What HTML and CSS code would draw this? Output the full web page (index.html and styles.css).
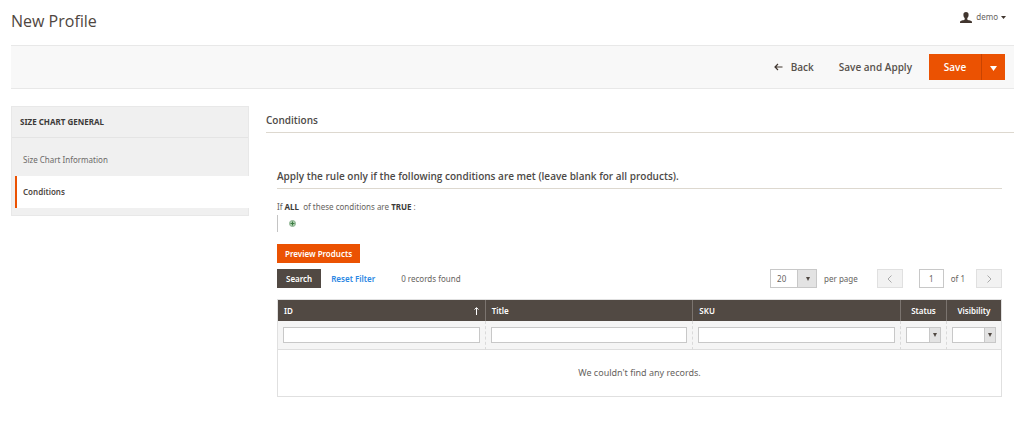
FILE: index.html
```html
<!DOCTYPE html>
<html lang="en">
<head>
<meta charset="utf-8">
<meta name="viewport" content="width=device-width, initial-scale=1">
<title>New Profile</title>
<link rel="stylesheet" href="styles.css">
</head>
<body>
<div class="page">
  <header class="page-header">
    <h1 class="page-title">New Profile</h1>
    <button type="button" class="account">
      <svg class="account-icon" viewBox="0 0 12 11" aria-hidden="true"><path d="M6 0C4.300 0 3.300 .9 3.400 2.900C3.500 4.600 4 5.400 4.700 6V7.600C4.400 8.500 1 8.300 .3 9.300C0 9.800 0 10.500 0 11H12C12 10.500 12 9.800 11.700 9.300C11 8.300 7.600 8.500 7.300 7.600V6C8 5.400 8.500 4.600 8.600 2.900C8.700 .9 7.700 0 6 0Z"/></svg>
      <span>demo</span>
      <svg class="account-caret" viewBox="0 0 5 3" aria-hidden="true"><path d="M0 0H5L2.500 3Z"/></svg>
    </button>
  </header>

  <div class="toolbar">
    <button type="button" class="action">
      <svg class="back-icon" viewBox="0 0 9 8" aria-hidden="true"><path d="M8.500 4H1M4 1L1 4L4 7"/></svg>
      <span>Back</span>
    </button>
    <button type="button" class="action">Save and Apply</button>
    <div class="split">
      <button type="button" class="split-main">Save</button>
      <button type="button" class="split-toggle" aria-label="More save options">
        <svg class="split-caret" viewBox="0 0 7 5" aria-hidden="true"><path d="M0 0H7L3.500 5Z"/></svg>
      </button>
    </div>
  </div>

  <div class="columns">
    <nav class="sidebar">
      <h2 class="sidebar-title">SIZE CHART GENERAL</h2>
      <ul class="tabs">
        <li><a class="tab" href="#information">Size Chart Information</a></li>
        <li><a class="tab tab-active" href="#conditions">Conditions</a></li>
      </ul>
    </nav>

    <main class="content">
      <h2 class="section-title">Conditions</h2>
      <div class="fieldset">
        <h3 class="legend">Apply the rule only if the following conditions are met (leave blank for all products).</h3>
        <p class="rule">If <b>ALL</b>&nbsp; of these conditions are <b>TRUE</b> :</p>
        <div class="rule-tree">
          <button type="button" class="add" aria-label="Add condition">
            <svg class="add-icon" viewBox="0 0 7 7" aria-hidden="true"><circle cx="3.500" cy="3.500" r="3"/><path d="M3.500 1.500V5.500M1.500 3.500H5.500"/></svg>
          </button>
        </div>
        <button type="button" class="btn btn-primary">Preview Products</button>

        <div class="grid-bar">
          <button type="button" class="btn btn-dark">Search</button>
          <button type="button" class="reset">Reset Filter</button>
          <span class="found">0 records found</span>
          <span class="select per-page"><select id="limit"><option>20</option></select></span>
          <label class="per-page-label" for="limit">per page</label>
          <button type="button" class="pager" aria-label="Previous page" disabled>
            <svg class="pager-icon" viewBox="0 0 5 8" aria-hidden="true"><path d="M4.500 .5L1 4L4.500 7.500"/></svg>
          </button>
          <input class="page-input" id="page" type="text" value="1" aria-label="Page">
          <label class="page-total" for="page">of 1</label>
          <button type="button" class="pager" aria-label="Next page" disabled>
            <svg class="pager-icon" viewBox="0 0 5 8" aria-hidden="true"><path d="M.5 .5L4 4L.5 7.500"/></svg>
          </button>
        </div>

        <table class="grid">
          <colgroup><col><col><col><col class="col-status"><col class="col-visibility"></colgroup>
          <thead>
            <tr class="heads">
              <th scope="col"><span class="sorted">ID <svg class="sort-icon" viewBox="0 0 5 8" aria-hidden="true"><path d="M2.500 8V1M.5 2.500L2.500 .7L4.500 2.500"/></svg></span></th>
              <th scope="col">Title</th>
              <th scope="col">SKU</th>
              <th scope="col" class="center">Status</th>
              <th scope="col" class="center">Visibility</th>
            </tr>
            <tr class="filters">
              <td><input class="filter" type="text" aria-label="Filter by ID"></td>
              <td><input class="filter" type="text" aria-label="Filter by title"></td>
              <td><input class="filter" type="text" aria-label="Filter by SKU"></td>
              <td><span class="select select-small"><select aria-label="Filter by status"><option></option></select></span></td>
              <td><span class="select select-small"><select aria-label="Filter by visibility"><option></option></select></span></td>
            </tr>
          </thead>
          <tbody>
            <tr><td class="empty" colspan="5">We couldn't find any records.</td></tr>
          </tbody>
        </table>
      </div>
    </main>
  </div>
</div>
</body>
</html>
```

FILE: styles.css
```css
* { box-sizing: border-box; }

body {
  margin: 0;
  background: #fff;
  color: #666360;
  font: 8px/16px "Noto Sans", "Open Sans", sans-serif;
}

button, input, select { font: inherit; color: inherit; margin: 0; border-radius: 0; }
button { border: 0; padding: 0; background: none; cursor: pointer; }
h1, h2, h3, p, ul { margin: 0; padding: 0; }
svg { display: block; flex: none; }

.page { padding: 0 10px 0 11px; }

.page-header {
  display: flex;
  justify-content: space-between;
  align-items: flex-start;
  height: 45px;
  padding: 9px 8px 0 0;
}
.page-title { font: 400 16px/24px "Open Sans", sans-serif; color: #4f4640; }
.account { display: flex; align-items: center; gap: 3px; }
.account-icon { width: 12px; height: 11px; margin-right: 1px; fill: #41362f; }
.account-caret { width: 5px; height: 3px; fill: #41362f; }

.toolbar {
  display: flex;
  justify-content: flex-end;
  align-items: center;
  gap: 25px;
  height: 44px;
  padding-right: 9px;
  background: #f8f8f8;
  border-top: 1px solid #e8e8e8;
  border-bottom: 1px solid #e8e8e8;
  font-family: "Open Sans", sans-serif;
  font-size: 10px;
  font-weight: 600;
}
.action { display: flex; align-items: center; gap: 8px; color: #57514c; }
.back-icon { width: 9px; height: 8px; fill: none; stroke: #41362f; stroke-width: 1.2; }
.split { display: flex; height: 26px; margin-left: -8px; background: #eb5202; color: #fff; }
.split-main { width: 52px; }
.split-toggle { display: flex; align-items: center; justify-content: center; width: 24px; border-left: 1px solid #c84402; }
.split-caret { width: 7px; height: 5px; margin-top: 3px; fill: #fff; }

.columns { display: flex; align-items: flex-start; gap: 17px; padding-top: 17px; }

.sidebar { flex: 0 0 238px; padding-bottom: 7px; background: #f0f0f0; border: 1px solid #e8e8e8; }
.sidebar-title {
  padding: 7px 8px;
  border-bottom: 1px solid #e4e4e4;
  font-size: 8px;
  font-weight: 700;
  color: #3c3a38;
}
.tabs { list-style: none; padding: 6px 0 0 3px; }
.tab { display: block; padding: 8px; color: #6c6a68; text-decoration: none; }
.tab-active {
  margin-right: -1px;
  padding-left: 6px;
  border-left: 2px solid #eb5202;
  background: #fff;
  color: #4f4843;
  font-weight: 600;
}

.content { flex: 1; min-width: 0; }
.section-title,
.legend {
  padding-bottom: 4px;
  border-bottom: 1px solid #ddd8cf;
  font-family: "Open Sans", sans-serif;
  font-size: 10px;
  font-weight: 600;
  color: #4d4a47;
}
.section-title { padding-top: 6px; }
.fieldset { padding: 35px 12px 0 11px; }
.rule { padding-top: 10px; }
.rule b { color: #3c3a38; }
.rule-tree { display: flex; align-items: center; height: 17px; margin-bottom: 12px; padding-left: 11px; border-left: 1px solid #c4c4c4; }
.add-icon { width: 7px; height: 7px; fill: #a9cfac; stroke: #8fb293; stroke-width: 1; }
.add-icon path { stroke: #3c7a43; }

.btn { height: 19px; padding: 0 8px; font-weight: 600; color: #fff; }
.btn-primary { display: block; background: #eb5202; }
.btn-dark { padding: 0 9px; background: #514943; }

.grid-bar { display: flex; align-items: center; height: 19px; margin: 6px 0 11px; }
.reset { margin-left: 10px; font-weight: 600; color: #2b87e3; }
.found { margin-left: 26px; }

.select { position: relative; display: block; }
.select select {
  display: block;
  width: 100%;
  height: 19px;
  padding: 0 20px 0 6px;
  border: 1px solid #c8c8c8;
  appearance: none;
  background: linear-gradient(to left, #e3e3e3 18px, #c8c8c8 18px, #c8c8c8 19px, #fff 19px);
}
.select::after {
  content: "";
  position: absolute;
  top: 8px;
  right: 7px;
  border: 2px solid transparent;
  border-top: 4px solid #514943;
  border-bottom: 0;
  pointer-events: none;
}
.per-page { width: 47px; margin-left: auto; }
.per-page-label { margin: 0 19px 0 7px; }
.pager { display: flex; align-items: center; justify-content: center; width: 26px; height: 19px; border: 1px solid #e0e0e0; background: #f2f2f2; }
.pager-icon { width: 5px; height: 8px; fill: none; stroke: #aaa; }
.page-input { width: 25px; height: 19px; margin-left: 16px; padding: 0; border: 1px solid #c8c8c8; text-align: center; }
.page-total { margin: 0 11px 0 7px; }

.grid { width: 100%; table-layout: fixed; border-collapse: separate; border-spacing: 0; border: 1px solid #e0e0e0; }
.col-status { width: 46px; }
.col-visibility { width: 54px; }
.heads th {
  height: 21px;
  padding: 0 6px;
  border-right: 1px solid #7b746f;
  background: #514943;
  color: #fff;
  font-size: 8px;
  font-weight: 600;
  text-align: left;
}
.heads .center { padding: 0; text-align: center; }
.sorted { display: flex; justify-content: space-between; align-items: center; }
.sort-icon { width: 5px; height: 8px; fill: none; stroke: #fff; stroke-width: 1; }
.filters td { padding: 6px 5px; border-right: 1px dashed #dadada; border-bottom: 1px solid #dedede; background: #f5f5f5; }
.heads th:last-child, .filters td:last-child { border-right: 0; }
.filter { display: block; width: 100%; height: 16px; padding: 0 4px; border: 1px solid #c8c8c8; background: #fff; }
.select-small select {
  height: 16px;
  padding: 0 12px 0 2px;
  background: linear-gradient(to left, #e3e3e3 10px, #c8c8c8 10px, #c8c8c8 11px, #fff 11px);
}
.select-small::after { top: 6px; right: 4px; }
.empty { height: 46px; padding: 0; font-size: 9px; text-align: center; }
```
